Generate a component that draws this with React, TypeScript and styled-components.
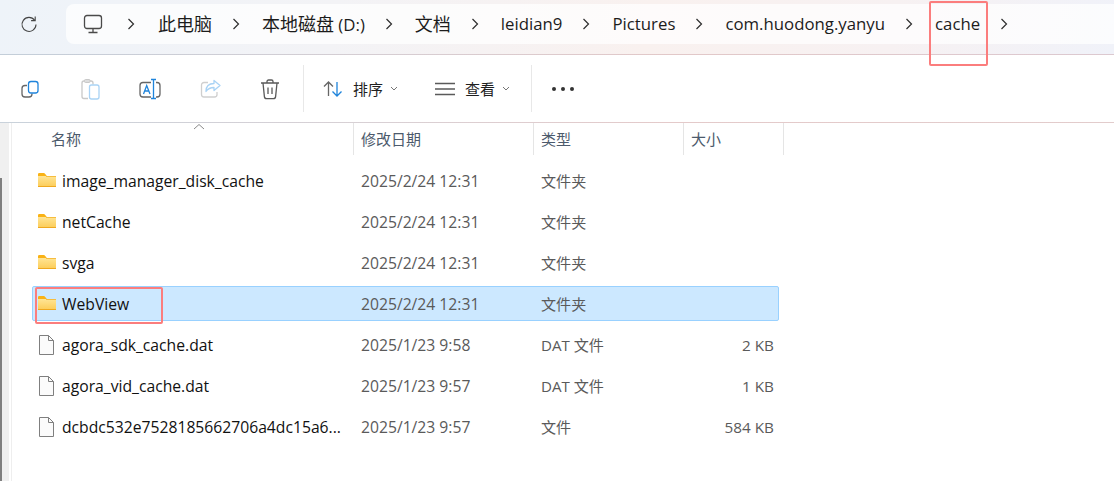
import styled, { createGlobalStyle } from 'styled-components';

const GlobalStyles = createGlobalStyle`
  html, body {
    margin: 0;
    padding: 0;
    background: #ffffff;
  }
  * {
    box-sizing: border-box;
  }
`;

const Window = styled.div`
  position: relative;
  width: 1114px;
  height: 481px;
  overflow: hidden;
  background: #ffffff;
  font-family: 'Open Sans', 'Noto Sans CJK SC', sans-serif;
  color: #1a1a1a;
`;

const AddressBar = styled.div`
  display: flex;
  align-items: flex-start;
  height: 55px;
  padding: 4px 0 0 20px;
  background: linear-gradient(100deg, #eef3f9 0%, #f3f3f6 30%, #f9f1ef 58%, #f7f1f2 80%, #f0f2f9 100%);
  border-bottom: 1px solid;
  border-image: linear-gradient(90deg, #c3ced9 0%, #d6cdd2 35%, #e2c8c8 60%, #dcc9d0 100%) 1;
`;

const RefreshButton = styled.div`
  display: flex;
  align-items: center;
  width: 46px;
  height: 40px;
`;

const Breadcrumbs = styled.div`
  flex: 1;
  display: flex;
  align-items: center;
  height: 40px;
  padding-left: 16px;
  border-radius: 8px 0 0 8px;
  background: rgba(255, 255, 255, 0.72);
`;

const Crumb = styled.span`
  margin-bottom: 2px;
  font-size: 16.8px;
  white-space: nowrap;
  color: #1c1c1c;
`;

const Han = styled.span`
  font-size: 18px;
`;

const CrumbSep = styled.span`
  display: flex;
  justify-content: center;
  width: 10px;
  margin: 0 21px 0 19px;
`;

const FirstSep = styled(CrumbSep)`
  margin-left: 22px;
  margin-right: 22px;
`;

const Toolbar = styled.div`
  display: flex;
  align-items: center;
  height: 68px;
  border-bottom: 1px solid;
  border-image: linear-gradient(90deg, #c9d2db 0%, #d9d0d4 35%, #e4caca 60%, #e2cccc 100%) 1;
`;

const ToolIcon = styled.div`
  display: flex;
  align-items: center;
  justify-content: center;
  width: 60px;
  height: 24px;
`;

const ToolDivider = styled.div<{ $left: number; $right: number }>`
  width: 1px;
  height: 47px;
  margin: 0 ${(p) => p.$right}px 0 ${(p) => p.$left}px;
  background: #e8e8e8;
`;

const ToolMenu = styled.div`
  display: flex;
  align-items: center;
  width: 112px;
  color: #1f1f1f;
`;

const MenuLabel = styled.span`
  margin: 0 7px 0 10px;
  font-size: 15px;
  white-space: nowrap;
`;

const Dots = styled.div`
  display: flex;
  gap: 5px;
`;

const Dot = styled.span`
  width: 4px;
  height: 4px;
  border-radius: 50%;
  background: #333333;
`;

const Body = styled.div`
  display: flex;
  height: 358px;
`;

const Rail = styled.div`
  flex: none;
  width: 12px;
  padding-top: 55px;
  background: #ffffff;
  border-right: 1px solid #eeeeee;
  box-shadow: inset 9px 0 0 #f0f0f0;
`;

const RailThumb = styled.div`
  width: 2px;
  height: 100%;
  background: #808080;
`;

const Listing = styled.div`
  flex: none;
  margin-left: 20px;
  width: 752px;
`;

const Header = styled.div`
  display: grid;
  grid-template-columns: 322px 180px 150px 100px;
  height: 32px;
`;

const HeaderCell = styled.div<{ $pad: number }>`
  position: relative;
  display: flex;
  align-items: center;
  padding: 0 0 2px ${(p) => p.$pad}px;
  border-right: 1px solid #e5e5e5;
  font-size: 15px;
  color: #4c5a6c;
`;

const SortCaret = styled.svg`
  position: absolute;
  left: 161px;
  top: 0;
`;

const Rows = styled.div`
  display: flex;
  flex-direction: column;
  gap: 6px;
  padding-top: 8px;
  width: 747px;
`;

const Row = styled.div<{ $selected?: boolean }>`
  display: grid;
  grid-template-columns: 322px 180px 150px 95px;
  align-items: center;
  height: 35px;
  border: 1px solid ${(p) => (p.$selected ? '#99d1ff' : 'transparent')};
  border-radius: 2px;
  background: ${(p) => (p.$selected ? '#cce8ff' : 'transparent')};
`;

const NameCell = styled.div`
  display: flex;
  align-items: center;
  gap: 5px;
  padding-left: 5px;
  font-size: 15.7px;
  white-space: nowrap;
  color: #111111;
`;

const MetaCell = styled.div<{ $size: number; $right?: boolean }>`
  font-size: ${(p) => p.$size}px;
  white-space: nowrap;
  color: #5a5a5a;
  padding: ${(p) => (p.$right ? '0 6px 0 0' : '0 0 0 6px')};
  text-align: ${(p) => (p.$right ? 'right' : 'left')};
`;

const TypeCell = styled(MetaCell)`
  margin-bottom: 2px;
`;

const Callout = styled.div<{ $x: number; $y: number; $w: number; $h: number }>`
  position: absolute;
  left: ${(p) => p.$x}px;
  top: ${(p) => p.$y}px;
  width: ${(p) => p.$w}px;
  height: ${(p) => p.$h}px;
  border: 2px solid #fb7d7d;
  border-radius: 2px;
`;

const Chevron = () => (
  <svg width="10" height="14" viewBox="0 0 10 14" fill="none">
    <path d="M2.5 2 L7.5 7 L2.5 12" stroke="#2e2e2e" strokeWidth="1.2" />
  </svg>
);

const SmallChevron = () => (
  <svg width="8" height="6" viewBox="0 0 8 6" fill="none">
    <path d="M1 1 L4 4 L7 1" stroke="#777777" strokeWidth="1" />
  </svg>
);

const FolderIcon = () => (
  <svg width="19" height="17" viewBox="0 0 19 17">
    <defs>
      <linearGradient id="folderFill" x1="0" y1="0" x2="0" y2="1">
        <stop offset="0" stopColor="#ffe595" />
        <stop offset="1" stopColor="#fccc57" />
      </linearGradient>
    </defs>
    <path d="M0 2.2 a1.2 1.2 0 0 1 1.2 -1.2 h5 l2.4 2.6 L8 5 H0 z" fill="#f9b215" />
    <path d="M0 4 H17.2 a0.8 0.8 0 0 1 0.8 0.8 V14.2 a0.8 0.8 0 0 1 -0.8 0.8 H0.8 a0.8 0.8 0 0 1 -0.8 -0.8 z" fill="url(#folderFill)" />
    <path d="M8 4.5 H18" stroke="#f6bd3f" strokeWidth="1" />
    <path d="M0 14.5 H18" stroke="#efa81f" strokeWidth="1" />
  </svg>
);

const FileIcon = () => (
  <svg width="19" height="21" viewBox="0 0 19 21" fill="none">
    <path d="M1.5 1.5 H10.5 L15.5 6.5 V20.5 H1.5 z" fill="#fbfbfb" stroke="#7f7f7f" />
    <path d="M10.5 1.5 V6.5 H15.5" stroke="#7f7f7f" />
  </svg>
);

const rows = [
  { name: 'image_manager_disk_cache', date: '2025/2/24 12:31', type: '文件夹', size: '', folder: true },
  { name: 'netCache', date: '2025/2/24 12:31', type: '文件夹', size: '', folder: true },
  { name: 'svga', date: '2025/2/24 12:31', type: '文件夹', size: '', folder: true },
  { name: 'WebView', date: '2025/2/24 12:31', type: '文件夹', size: '', folder: true, selected: true },
  { name: 'agora_sdk_cache.dat', date: '2025/1/23 9:58', type: 'DAT 文件', size: '2 KB' },
  { name: 'agora_vid_cache.dat', date: '2025/1/23 9:57', type: 'DAT 文件', size: '1 KB' },
  { name: 'dcbdc532e7528185662706a4dc15a6...', date: '2025/1/23 9:57', type: '文件', size: '584 KB' },
];

export default function App() {
  return (
    <Window>
      <GlobalStyles />
      <AddressBar>
        <RefreshButton>
          <svg width="18" height="18" viewBox="0 0 18 18" fill="none">
            <path d="M14.6 5.2 A7 7 0 1 0 16 9.5" stroke="#444444" strokeWidth="1.1" />
            <path d="M15.2 1.5 V5.6 H11.1" stroke="#444444" strokeWidth="1.1" />
          </svg>
        </RefreshButton>
        <Breadcrumbs>
          <svg width="22" height="22" viewBox="0 0 22 22" fill="none">
            <rect x="2.5" y="2.5" width="17" height="13" rx="2.5" stroke="#4a4a4a" strokeWidth="1.3" />
            <path d="M11 15.5 V19 M6.5 19.5 H15.5" stroke="#4a4a4a" strokeWidth="1.3" />
          </svg>
          <FirstSep>
            <Chevron />
          </FirstSep>
          <Crumb><Han>此电脑</Han></Crumb>
          <CrumbSep><Chevron /></CrumbSep>
          <Crumb><Han>本地磁盘</Han> (D:)</Crumb>
          <CrumbSep><Chevron /></CrumbSep>
          <Crumb><Han>文档</Han></Crumb>
          <CrumbSep><Chevron /></CrumbSep>
          <Crumb>leidian9</Crumb>
          <CrumbSep><Chevron /></CrumbSep>
          <Crumb>Pictures</Crumb>
          <CrumbSep><Chevron /></CrumbSep>
          <Crumb>com.huodong.yanyu</Crumb>
          <CrumbSep><Chevron /></CrumbSep>
          <Crumb>cache</Crumb>
          <CrumbSep><Chevron /></CrumbSep>
        </Breadcrumbs>
      </AddressBar>

      <Toolbar>
        <ToolIcon>
          <svg width="24" height="24" viewBox="0 0 24 24" fill="none">
            <path d="M9 8.5 H7 a3 3 0 0 0 -3 3 V17 a3 3 0 0 0 3 3 h4 a3 3 0 0 0 3 -3 v-0.5" stroke="#666666" strokeWidth="1.3" />
            <rect x="10.5" y="4.5" width="9.5" height="11.5" rx="2.5" stroke="#1f84db" strokeWidth="1.3" />
          </svg>
        </ToolIcon>
        <ToolIcon>
          <svg width="24" height="24" viewBox="0 0 24 24" fill="none">
            <path d="M10 21.5 H6 a2 2 0 0 1 -2 -2 V6 a2 2 0 0 1 2 -2 h7 a2 2 0 0 1 2 2 v1.5" stroke="#c9c9c9" strokeWidth="1.3" />
            <rect x="6.5" y="2.5" width="5.5" height="3" rx="1" fill="#dddddd" stroke="#c9c9c9" />
            <rect x="11.5" y="8" width="9.5" height="14" rx="2" stroke="#a9d3f5" strokeWidth="1.3" />
          </svg>
        </ToolIcon>
        <ToolIcon>
          <svg width="24" height="24" viewBox="0 0 24 24" fill="none">
            <path d="M13 5.5 H5 a3 3 0 0 0 -3 3 V17 a3 3 0 0 0 3 3 h8 M18 5.5 h1 a3 3 0 0 1 3 3 V17 a3 3 0 0 1 -3 3 h-1" stroke="#666666" strokeWidth="1.3" />
            <path d="M15.5 2.5 V21.5 M13 2.5 H18 M13 21.5 H18" stroke="#1f84db" strokeWidth="1.3" />
            <path d="M5.5 17 L8.7 8.5 L12 17 M6.7 14 H10.8" stroke="#1f84db" strokeWidth="1.3" />
          </svg>
        </ToolIcon>
        <ToolIcon>
          <svg width="24" height="24" viewBox="0 0 24 24" fill="none">
            <path d="M10 5.5 H6 a2.5 2.5 0 0 0 -2.5 2.5 V17.5 a2.5 2.5 0 0 0 2.5 2.5 H16.5 a2.5 2.5 0 0 0 2.5 -2.5 V15" stroke="#cfcfcf" strokeWidth="1.3" />
            <path d="M22 8.5 L16 3.5 V6.5 C11 6.5 8 9.5 8 14.5 C10 11.5 13 10.5 16 10.5 V13.5 Z" stroke="#a9d3f5" strokeWidth="1.3" strokeLinejoin="round" />
          </svg>
        </ToolIcon>
        <ToolIcon>
          <svg width="24" height="24" viewBox="0 0 24 24" fill="none">
            <path d="M3 6 H21 M9 6 V4.5 a1.5 1.5 0 0 1 1.5 -1.5 h3 a1.5 1.5 0 0 1 1.5 1.5 V6" stroke="#5a5a5a" strokeWidth="1.3" />
            <path d="M5 6 L6.4 19.6 a2.2 2.2 0 0 0 2.2 2 h6.8 a2.2 2.2 0 0 0 2.2 -2 L19 6" stroke="#5a5a5a" strokeWidth="1.3" />
            <path d="M10 10.5 V17 M14 10.5 V17" stroke="#5a5a5a" strokeWidth="1.3" />
          </svg>
        </ToolIcon>
        <ToolDivider $left={3} $right={19} />
        <ToolMenu>
          <svg width="20" height="18" viewBox="0 0 20 18" fill="none">
            <path d="M5.5 16 V2 M1 6.5 L5.5 2 L10 6.5" stroke="#666666" strokeWidth="1.3" />
            <path d="M14 2 V16 M9.5 11.5 L14 16 L18.5 11.5" stroke="#1f84db" strokeWidth="1.3" />
          </svg>
          <MenuLabel>排序</MenuLabel>
          <SmallChevron />
        </ToolMenu>
        <ToolMenu>
          <svg width="20" height="14" viewBox="0 0 20 14" fill="none">
            <path d="M0 1.5 H20 M0 7 H20 M0 12.5 H20" stroke="#5a5a5a" strokeWidth="1.3" />
          </svg>
          <MenuLabel>查看</MenuLabel>
          <SmallChevron />
        </ToolMenu>
        <ToolDivider $left={-16} $right={20} />
        <Dots>
          <Dot />
          <Dot />
          <Dot />
        </Dots>
      </Toolbar>

      <Body>
        <Rail>
          <RailThumb />
        </Rail>
        <Listing>
          <Header>
            <HeaderCell $pad={19}>
              名称
              <SortCaret width="12" height="7" viewBox="0 0 12 7" fill="none">
                <path d="M1 6 L6 1.5 L11 6" stroke="#8a8a8a" strokeWidth="1" />
              </SortCaret>
            </HeaderCell>
            <HeaderCell $pad={7}>修改日期</HeaderCell>
            <HeaderCell $pad={7}>类型</HeaderCell>
            <HeaderCell $pad={7}>大小</HeaderCell>
          </Header>
          <Rows>
            {rows.map((r) => (
              <Row key={r.name} $selected={r.selected}>
                <NameCell>
                  {r.folder ? <FolderIcon /> : <FileIcon />}
                  {r.name}
                </NameCell>
                <MetaCell $size={15.7}>{r.date}</MetaCell>
                <TypeCell $size={15.1}>{r.type}</TypeCell>
                <MetaCell $size={15.3} $right>{r.size}</MetaCell>
              </Row>
            ))}
          </Rows>
        </Listing>
      </Body>

      <Callout $x={929} $y={1} $w={59} $h={65} />
      <Callout $x={35} $y={287} $w={128} $h={37} />
    </Window>
  );
}
